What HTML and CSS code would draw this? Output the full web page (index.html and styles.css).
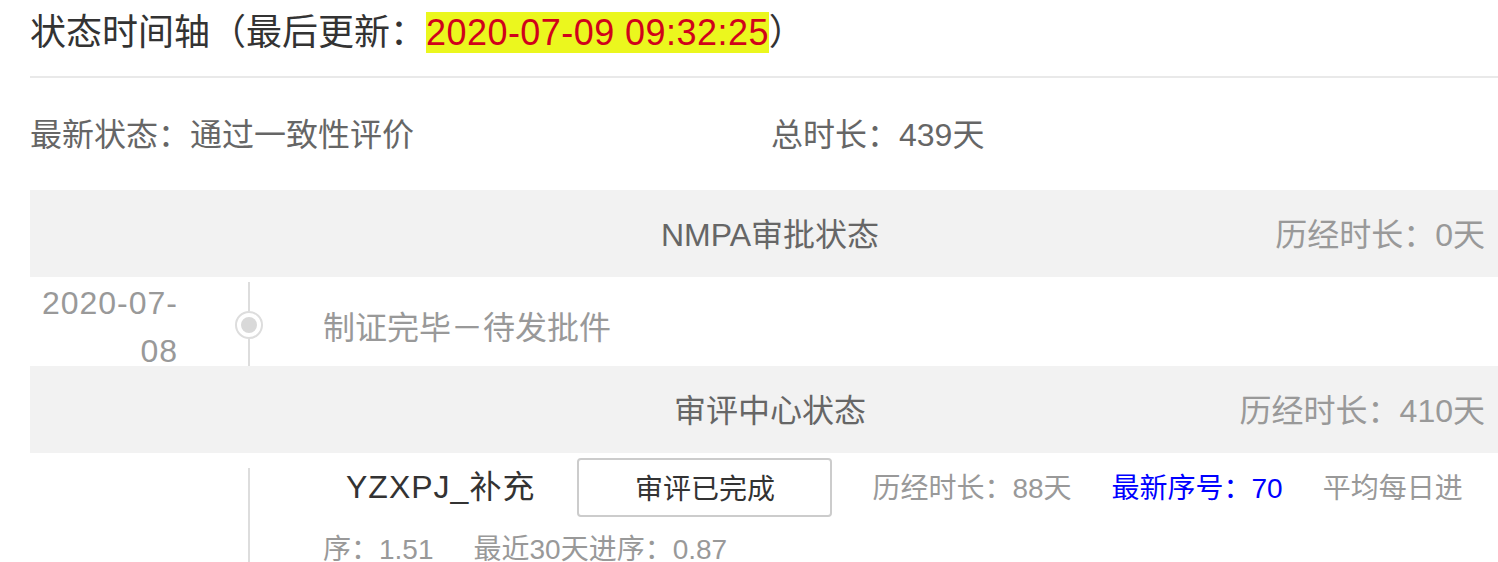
FILE: index.html
```html
<!DOCTYPE html>
<html lang="zh-CN">
<head>
<meta charset="utf-8">
<title>状态时间轴</title>
<link rel="stylesheet" href="styles.css">
</head>
<body>
<div class="page">
  <h1 class="title">状态时间轴（最后更新：<span class="stamp">2020-07-09 09:32:25</span>）</h1>

  <div class="summary">
    <div class="summary-item">最新状态：通过一致性评价</div>
    <div class="summary-item">总时长：439天</div>
  </div>

  <div class="band band-first">
    <div class="band-title">NMPA审批状态</div>
    <div class="band-dur">历经时长：0天</div>
  </div>

  <div class="event">
    <div class="event-date">2020-07-<wbr>08</div>
    <div class="axis">
      <div class="axis-line axis-top"></div>
      <div class="dot"><div class="dot-core"></div></div>
      <div class="axis-line axis-rest"></div>
    </div>
    <div class="event-text">制证完毕－待发批件</div>
  </div>

  <div class="band">
    <div class="band-title">审评中心状态</div>
    <div class="band-dur">历经时长：410天</div>
  </div>

  <div class="stage">
    <div class="stage-date"></div>
    <div class="axis axis-stage">
      <div class="axis-line axis-rest"></div>
    </div>
    <div class="stage-body"><span class="name">YZXPJ_补充</span><span class="status-btn">审评已完成</span><span class="info">历经时长：88天</span><span class="info info-blue">最新序号：70</span><span class="info">平均每日进序：1.51</span><span class="info">最近30天进序：0.87</span></div>
  </div>
</div>
</body>
</html>
```
FILE: styles.css
```css
html {
  overflow: hidden;
}
body {
  margin: 0;
  background: #ffffff;
  font-family: "Liberation Sans", "Noto Sans CJK SC", sans-serif;
}
.page {
  padding-left: 30px;
}
.title {
  margin: 0;
  padding: 12px 0 23px;
  font-size: 36px;
  line-height: 41px;
  font-weight: normal;
  color: #333333;
  border-bottom: 2px solid #e9e9e9;
}
.stamp {
  font-family: "Liberation Sans", sans-serif;
  letter-spacing: 0.45px;
  background: #ebf71e;
  color: #d0021b;
}
.summary {
  display: grid;
  grid-template-columns: 741px 1fr;
  margin-top: 33px;
  font-size: 32px;
  line-height: 48px;
  color: #666666;
}
.band {
  display: grid;
  grid-template-columns: 1fr auto 1fr;
  box-sizing: border-box;
  height: 87px;
  padding: 4px 13px 0 25px;
  line-height: 83px;
  font-size: 32px;
  background: #f2f2f2;
}
.band-first {
  margin-top: 31px;
}
.band-title {
  grid-column: 2;
  color: #666666;
}
.band-dur {
  grid-column: 3;
  justify-self: end;
  color: #999999;
}
.event {
  display: grid;
  grid-template-columns: 148px 142px 1fr;
  grid-template-rows: 89px;
  height: 89px;
}
.event-date {
  padding-top: 2px;
  line-height: 48px;
  font-size: 32px;
  letter-spacing: 1px;
  text-align: right;
  color: #999999;
}
.axis {
  display: flex;
  flex-direction: column;
  align-items: center;
  padding-top: 5px;
}
.axis-line {
  width: 2px;
  background: #dddddd;
}
.axis-top {
  height: 29px;
}
.axis-rest {
  flex: 1;
}
.dot {
  display: flex;
  align-items: center;
  justify-content: center;
  box-sizing: border-box;
  width: 28px;
  height: 28px;
  border: 2px solid #dddddd;
  border-radius: 50%;
  background: #ffffff;
}
.dot-core {
  width: 16px;
  height: 16px;
  border-radius: 50%;
  background: #d9d9d9;
}
.event-text {
  padding: 27px 0 0 3px;
  line-height: 48px;
  font-size: 32px;
  color: #999999;
}
.stage {
  display: grid;
  grid-template-columns: 148px 142px 1fr;
}
.axis-stage {
  padding-top: 15px;
}
.stage-body {
  padding: 4px 20px 0 3px;
  line-height: 61px;
  font-size: 28px;
  color: #999999;
}
.name {
  margin: 0 42px 0 23px;
  font-size: 32px;
  letter-spacing: 1px;
  color: #333333;
}
.status-btn {
  display: inline-block;
  vertical-align: top;
  box-sizing: border-box;
  width: 255px;
  height: 59px;
  margin: 1px 40px 0 0;
  padding-top: 5px;
  border: 2px solid #cccccc;
  border-radius: 4px;
  line-height: 50px;
  text-align: center;
  color: #333333;
}
.info {
  margin-right: 40px;
}
.info-blue {
  color: #0000ff;
}
```
